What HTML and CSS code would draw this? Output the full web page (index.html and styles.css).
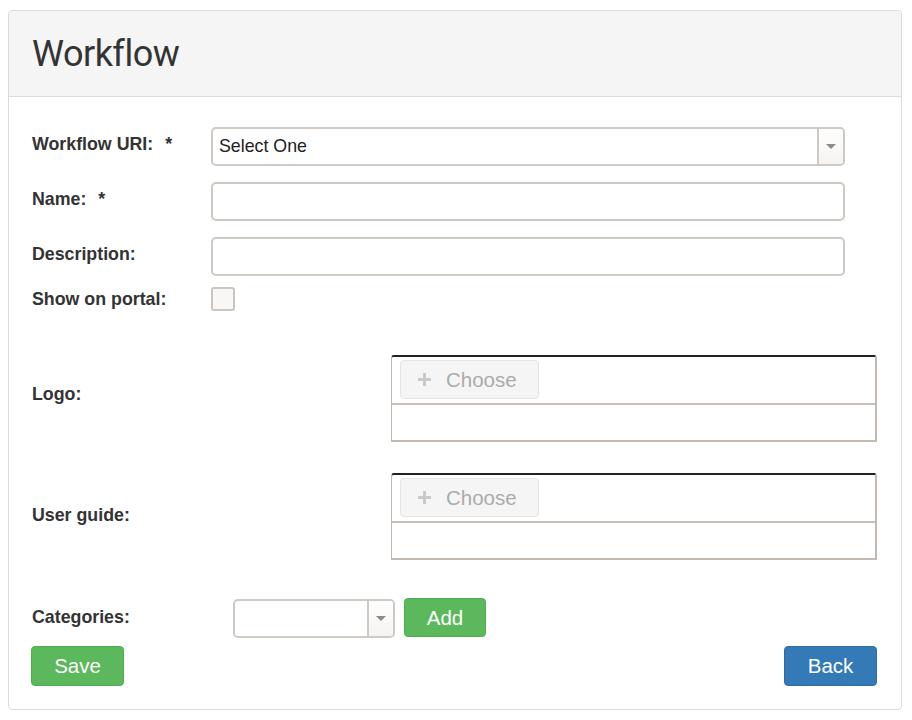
FILE: index.html
```html
<!DOCTYPE html>
<html>
<head>
<meta charset="utf-8">
<title>Workflow</title>
<link rel="stylesheet" href="styles.css">
</head>
<body>
<div class="panel">
  <div class="panel-heading"><h1 class="title">Workflow</h1></div>
  <div class="panel-body">
    <div class="row r-field">
      <label class="lbl col-a">Workflow URI:<span class="req">*</span></label>
      <div class="select select-wide">
        <span class="select-text">Select One</span>
        <span class="trigger"><span class="tri"></span></span>
      </div>
    </div>
    <div class="row r-field gap16">
      <label class="lbl col-a">Name:<span class="req">*</span></label>
      <div class="input"></div>
    </div>
    <div class="row r-field gap16">
      <label class="lbl col-a">Description:</label>
      <div class="input"></div>
    </div>
    <div class="row r-check">
      <label class="lbl col-a">Show on portal:</label>
      <span class="checkbox"></span>
    </div>
    <div class="row r-upload logo-row">
      <label class="lbl col-b lbl-up1">Logo:</label>
      <div class="upload">
        <div class="upload-bar">
          <span class="choose"><svg class="plus" width="13" height="13" viewBox="0 0 13 13"><path d="M5 0h3v5h5v3H8v5H5V8H0V5h5z" fill="#c9c9c9"/></svg>Choose</span>
        </div>
        <div class="upload-content"></div>
      </div>
    </div>
    <div class="row r-upload guide-row">
      <label class="lbl col-b lbl-up2">User guide:</label>
      <div class="upload">
        <div class="upload-bar">
          <span class="choose"><svg class="plus" width="13" height="13" viewBox="0 0 13 13"><path d="M5 0h3v5h5v3H8v5H5V8H0V5h5z" fill="#c9c9c9"/></svg>Choose</span>
        </div>
        <div class="upload-content"></div>
      </div>
    </div>
    <div class="row r-cat">
      <label class="lbl col-c">Categories:</label>
      <div class="select select-small">
        <span class="select-text"></span>
        <span class="trigger"><span class="tri"></span></span>
      </div>
      <button class="btn btn-success btn-add">Add</button>
    </div>
    <div class="row r-actions">
      <button class="btn btn-success btn-save">Save</button>
      <button class="btn btn-primary btn-back">Back</button>
    </div>
  </div>
</div>
</body>
</html>
```

FILE: styles.css
```css
html, body {
  margin: 0;
  padding: 0;
  background: #fff;
}
body {
  font-family: "Liberation Sans", Arial, sans-serif;
  color: #333;
  padding-top: 10px;
}
.panel {
  margin-left: 8px;
  width: 894px;
  box-sizing: border-box;
  border: 1px solid #dcdcdc;
  border-radius: 4px;
  background: #fff;
}
.panel-heading {
  height: 86px;
  background: #f5f5f5;
  border-bottom: 1px solid #dcdcdc;
  border-radius: 3px 3px 0 0;
  padding-left: 23px;
  box-sizing: border-box;
  display: flex;
  align-items: center;
}
.title {
  margin: 1px 0 0 0;
  font-family: Roboto, "Open Sans", sans-serif;
  font-weight: 400;
  font-size: 36px;
  line-height: 40px;
  letter-spacing: -0.5px;
  color: #333;
}
.panel-body {
  padding: 30px 24px 23px 23px;
}
.row {
  display: flex;
}
.lbl {
  font-weight: bold;
  font-size: 17.8px;
  line-height: 20px;
  color: #333;
  flex: none;
}
.req {
  margin-left: 12px;
}
.col-a { width: 179px; padding-top: 7px; }
.col-b { width: 359px; }
.col-c { width: 201px; padding-top: 9px; }

.r-field { height: 39px; align-items: flex-start; }
.gap16 { margin-top: 16px; }

.select, .input {
  box-sizing: border-box;
  height: 39px;
  border: 2px solid #cfc9c4;
  border-radius: 5px;
  background: #fff;
}
.input { width: 634px; }
.select {
  display: flex;
  align-items: center;
  overflow: hidden;
}
.select-wide { width: 634px; }
.select-small { width: 162px; margin-top: 1px; }
.select-text {
  flex: 1;
  padding-left: 6px;
  font-size: 17.8px;
  color: #222;
}
.trigger {
  width: 26px;
  height: 100%;
  box-sizing: border-box;
  border-left: 2px solid #cfc9c4;
  background: linear-gradient(#fff, #f5f3f1);
  display: flex;
  align-items: center;
  justify-content: center;
}
.tri {
  width: 0;
  height: 0;
  border-left: 5px solid transparent;
  border-right: 5px solid transparent;
  border-top: 5px solid #8a8a8a;
}

.r-check { margin-top: 6px; height: 28px; align-items: flex-start; }
.checkbox {
  margin-top: 5px;
  width: 24px;
  height: 24px;
  box-sizing: border-box;
  border: 2px solid #cbc5c0;
  border-radius: 3px;
  background: #f8f7f6;
}

.r-upload { align-items: center; }
.logo-row { margin-top: 45px; }
.guide-row { margin-top: 31px; }
.lbl-up1 { margin-bottom: 10px; }
.lbl-up2 { margin-bottom: 4px; }
.upload {
  width: 487px;
  height: 87px;
  box-sizing: border-box;
  border: 2px solid #c3bab2;
  border-left-width: 1px;
  border-top: 2px solid #222;
  border-radius: 3px 3px 0 0;
  display: flex;
  flex-direction: column;
}
.upload-bar {
  padding: 3px 0 4px 8px;
  border-bottom: 2px solid #c8c0b8;
  display: flex;
}
.choose {
  box-sizing: border-box;
  width: 139px;
  height: 39px;
  border: 1px solid #e4e4e4;
  border-radius: 4px;
  background: #f5f5f5;
  display: flex;
  align-items: center;
  padding-left: 17px;
  font-size: 20.5px;
  color: #ababab;
}
.plus { margin-right: 15px; flex: none; }
.upload-content { flex: 1; }

.r-cat { margin-top: 38px; height: 40px; align-items: flex-start; }
.btn {
  font-family: "Liberation Sans", Arial, sans-serif;
  font-size: 20.5px;
  color: #fff;
  border-radius: 4px;
  border: 1px solid;
  box-sizing: border-box;
  padding: 0;
  display: flex;
  align-items: center;
  justify-content: center;
}
.btn-success { background: #5cb85c; border-color: #4cae4c; }
.btn-primary { background: #337ab7; border-color: #2e6da4; }
.btn-add { width: 82px; height: 39px; margin-left: 9px; }
.r-actions { margin-top: 8px; justify-content: space-between; }
.btn-save { width: 93px; height: 40px; margin-left: -1px; }
.btn-back { width: 93px; height: 40px; }
```
